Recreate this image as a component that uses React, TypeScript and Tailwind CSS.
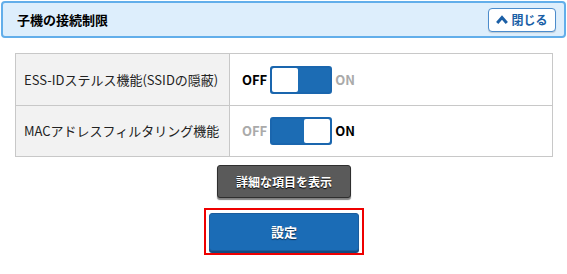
import { useState } from "react";

function Toggle({ on, onClick }: { on: boolean; onClick: () => void }) {
  return (
    <div className="flex items-center gap-[3px]">
      <span className={`text-[13px] font-bold ${on ? "text-[#aaaaaa]" : "text-black"}`}>OFF</span>
      <button
        onClick={onClick}
        className={`flex h-[28px] w-[62px] rounded-[3px] border-2 border-[#1a66ae] bg-[#1c6cb4] p-0 ${on ? "justify-end" : "justify-start"}`}
      >
        <span className="h-full w-[26px] rounded-[2px] bg-white" />
      </button>
      <span className={`text-[13px] font-bold ${on ? "text-black" : "text-[#aaaaaa]"}`}>ON</span>
    </div>
  );
}

export default function App() {
  const [stealth, setStealth] = useState(false);
  const [macFilter, setMacFilter] = useState(true);

  return (
    <div className="h-[274px] w-[567px] bg-white pt-px font-['Noto_Sans_CJK_JP','Noto_Sans',sans-serif] text-[#222]">
      {/* header */}
      <div className="mx-px flex h-[37px] items-center justify-between rounded-[4px] border-2 border-[#62aeea] bg-[#ddeefc] pl-[14px] pr-[8px]">
        <h2 className="text-[13px] font-bold text-black">子機の接続制限</h2>
        <button className="flex h-[24px] w-[68px] items-center justify-center gap-[3px] rounded-[4px] border border-[#4c8ccc] bg-white text-[12px] font-bold text-[#1b5fa6] shadow-[0_1px_1px_rgba(0,0,0,0.15)]">
          <svg width="12" height="9" viewBox="0 0 12 9">
            <path d="M1.2 8 L6 2.6 L10.8 8" fill="none" stroke="#1b5fa6" strokeWidth="3" />
          </svg>
          閉じる
        </button>
      </div>

      {/* table */}
      <div className="mx-[15px] mt-[15px] w-[538px] border border-[#c8c8c8]">
        <div className="flex h-[52px] border-b border-[#c8c8c8]">
          <div className="flex w-[214px] items-center border-r border-[#c8c8c8] bg-[#f2f2f2] pl-[8px] text-[13px]">
            ESS-IDステルス機能(SSIDの隠蔽)
          </div>
          <div className="flex items-center pl-[12px]">
            <Toggle on={stealth} onClick={() => setStealth(!stealth)} />
          </div>
        </div>
        <div className="flex h-[50px]">
          <div className="flex w-[214px] items-center border-r border-[#c8c8c8] bg-[#f2f2f2] pl-[8px] text-[13px]">
            MACアドレスフィルタリング機能
          </div>
          <div className="flex items-center pl-[12px]">
            <Toggle on={macFilter} onClick={() => setMacFilter(!macFilter)} />
          </div>
        </div>
      </div>

      {/* buttons */}
      <div className="flex flex-col items-center pl-[1px]">
        <button className="mt-[8px] h-[33px] w-[134px] rounded-[3px] border border-[#2e2e2e] bg-[#5a5a5a] text-[12px] font-bold text-white shadow-[0_2px_1px_rgba(0,0,0,0.5)] [text-shadow:0_1px_1px_#000]">
          詳細な項目を表示
        </button>
        <div className="mt-[10px] border-2 border-[#ee0000] p-[3px] pb-[2px]">
          <button className="h-[38px] w-[150px] rounded-[3px] border border-[#1b5c9c] bg-[#1b6cb6] text-[13px] font-bold text-white shadow-[0_2px_0_#144b80] [text-shadow:0_1px_1px_#0a2c50]">
            設定
          </button>
        </div>
      </div>
    </div>
  );
}
